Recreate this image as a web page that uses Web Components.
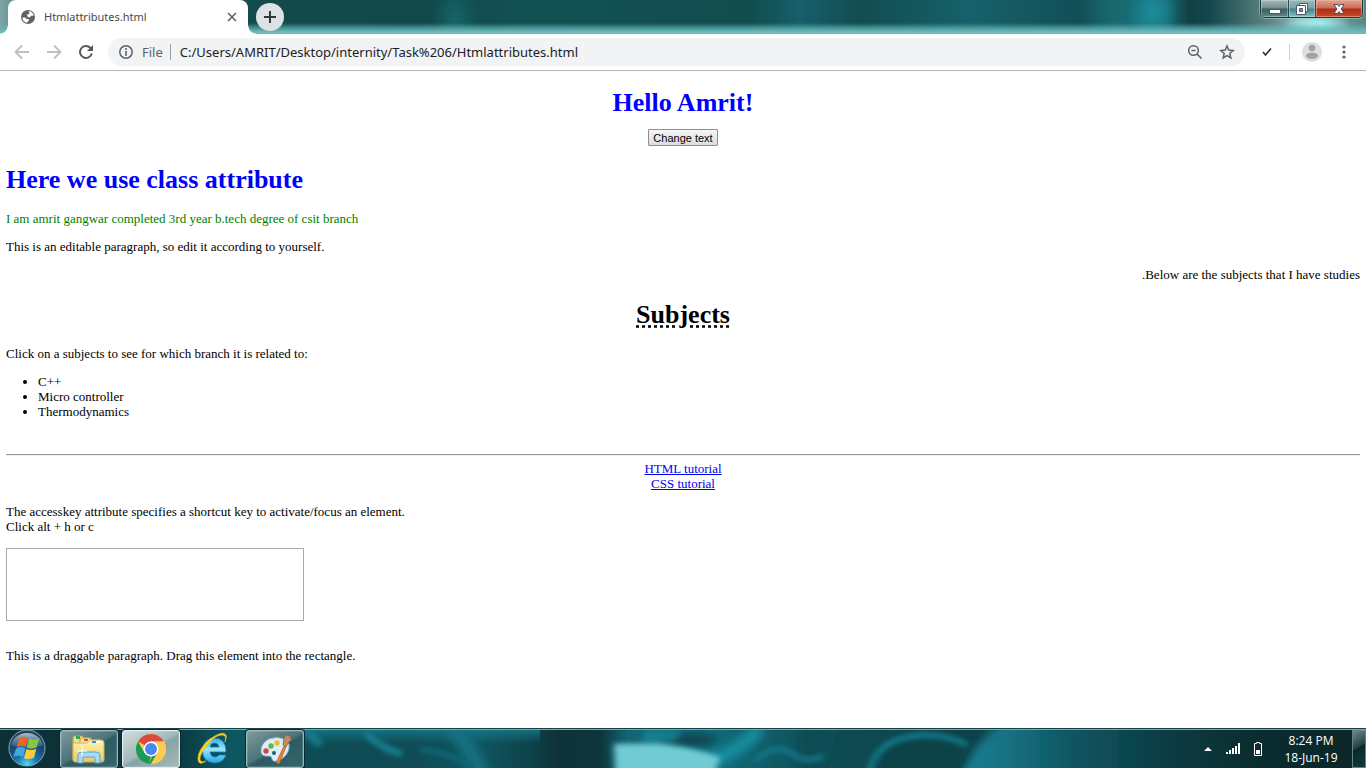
<!DOCTYPE html>
<html lang="en">
<head>
<meta charset="utf-8">
<title>Htmlattributes.html</title>
<style>
html, body { height: 100%; margin: 0; }
body { display: flex; flex-direction: column; background: #fff; overflow: hidden; }
page-view { flex: 1; }
</style>
</head>
<body>
<tab-strip><browser-tab>Htmlattributes.html</browser-tab></tab-strip>
<address-bar></address-bar>
<page-view></page-view>
<task-bar></task-bar>

<template id="tpl-tab">
<style>
:host { display: flex; align-items: center; position: relative; box-sizing: border-box; width: 240px; height: 34px; padding: 0 9px 0 12px; background: #fff; border-radius: 8px 8px 0 0; font: 11px/16px "Noto Sans", "Open Sans", sans-serif; color: #45494d; }
:host::before, :host::after { content: ""; position: absolute; bottom: 0; width: 8px; height: 8px; }
:host::before { left: -8px; background: radial-gradient(circle at 0 0, transparent 7px, #fff 8px); }
:host::after { right: -8px; background: radial-gradient(circle at 100% 0, transparent 7px, #fff 8px); }
.name { flex: 1; margin-left: 8px; white-space: nowrap; }
button { display: flex; border: 0; padding: 0; background: none; }
</style>
<svg width="16" height="16" viewBox="0 0 16 16"><circle cx="8" cy="8" r="7" fill="#5f6368"/><path d="M2.300 8.500h2.900l1.500 1.500h2v1.800l-1.800 1.900C4.200 13.200 2.400 11.200 2.300 8.500ZM8.200 2.300h1.900c1.900.8 3.300 2.500 3.600 4.500h-2.500l-1.200 1.400H8.300L7.200 7V5.300h1.500l1-1.300Z" fill="#fff"/></svg>
<span class="name"><slot></slot></span>
<button aria-label="Close tab"><svg width="14" height="14" viewBox="0 0 14 14"><path d="m3 3 8 8M11 3l-8 8" stroke="#5f6368" stroke-width="1.600"/></svg></button>
</template>

<template id="tpl-strip">
<style>
:host { display: flex; height: 34px; padding-left: 8px; background:
 linear-gradient(transparent 23px, #62b4b5aa 28px, #6bbcbd 32px),
 radial-gradient(ellipse 36px 26px at 1317px 32px, #a5efee 30%, transparent),
 radial-gradient(ellipse 26px 30px at 1152px 12px, #1b8e9b, transparent),
 radial-gradient(ellipse 24px 40px at 455px 20px, #156568, transparent),
 linear-gradient(90deg, #7fa3a3 0, #54898b 20px, #124b4c 250px, #124849 420px, #125153 520px, #124d4e 750px, #165f6c 800px, #124d50 860px, #15616b 970px, #155960 1020px, #124f58 1080px, #17696f 1110px, #176d78 1165px, #123f44 1190px, #13484d 1210px, #618684 1270px, #8cb8b7 1300px, #568582 1366px); }
.new { width: 28px; height: 28px; margin: 3px 0 0 8px; border: 0; border-radius: 50%; padding: 0; background: #dee1e6; display: grid; place-items: center; }
.controls { display: flex; height: 18px; margin: 0 3px 0 auto; box-sizing: border-box; border: 1px solid #173d40; border-top: 0; border-radius: 0 0 5px 5px; box-shadow: 0 0 0 1px #a4caca99; overflow: hidden; }
.controls button { width: 28px; padding: 0; border: 0; border-right: 1px solid #234a4c; display: grid; place-items: center; background: linear-gradient(#a6b8b8, #708e90 48%, #385d60 52%, #5c8989); box-shadow: inset 0 0 0 1px #d9eaea66; }
.controls .restore { width: 27px; background: linear-gradient(#9bb7b7, #76a3a5 48%, #457f86 52%, #81c4c6); }
.controls .close { width: 46px; border: 0; background: linear-gradient(#e0a595, #cd6a54 48%, #ad2c15 52%, #c84c2f); box-shadow: inset 0 0 0 1px #f2b7a888; }
</style>
<slot></slot>
<button class="new" aria-label="New tab"><svg width="16" height="16" viewBox="0 0 16 16"><path d="M8 2v12M2 8h12" stroke="#36393c" stroke-width="2"/></svg></button>
<div class="controls">
<button aria-label="Minimize"><svg width="14" height="14" viewBox="0 0 14 14"><rect x="1.500" y="7.500" width="11" height="4" fill="#fff" stroke="#4c5670"/></svg></button>
<button class="restore" aria-label="Restore"><svg width="14" height="14" viewBox="0 0 14 14"><path d="M4.500 1.500h8v8h-8Z" fill="#fff" stroke="#4c5670"/><path d="M1.500 3.500h9v9h-9Z" fill="#fff" stroke="#4c5670"/><path d="M4.500 6.500h3v3h-3Z" fill="#6d9da2" stroke="#4c5670"/></svg></button>
<button class="close" aria-label="Close"><svg width="14" height="14" viewBox="0 0 14 14"><path d="M2 2.500h3.500L7 4.500l1.500-2H12L9.200 7l2.800 4.500H8.500L7 9.500l-1.500 2H2L4.800 7Z" fill="#fff" stroke="#4c4860"/></svg></button>
</div>
</template>

<template id="tpl-address">
<style>
:host { display: flex; align-items: center; height: 36px; padding: 0 14px; border-bottom: 1px solid #b4b6b8; background: #fff; font: 13px/20px "Noto Sans", "Open Sans", sans-serif; }
button { width: 16px; height: 16px; border: 0; padding: 0; background: none; display: grid; place-items: center; flex: none; }
.nav { display: flex; gap: 16px; margin-right: 14px; }
.box { flex: 1; display: flex; align-items: center; height: 28px; border-radius: 14px; background: #f1f3f4; padding: 0 10px; }
.scheme { margin: 0 7px 0 8px; color: #5f6368; }
.bar { width: 1px; height: 16px; background: #9aa0a6; }
input { flex: 1; min-width: 0; border: 0; background: none; padding: 0 0 0 9px; outline: 0; font: inherit; color: #202124; }
.end { display: flex; gap: 16px; }
.tools { display: flex; align-items: center; margin-left: 14px; }
.tools .bar { margin: 0 12px 0 14px; background: #cfd1d4; }
.tools .who { width: 20px; height: 20px; margin-right: 14px; }
</style>
<div class="nav">
<button aria-label="Back"><svg width="16" height="16" viewBox="0 0 16 16"><path d="M15 8H2M8 1.500 1.500 8 8 14.500" fill="none" stroke="#bcbec0" stroke-width="1.800"/></svg></button>
<button aria-label="Forward"><svg width="16" height="16" viewBox="0 0 16 16"><path d="M1 8h13M8 1.500 14.500 8 8 14.500" fill="none" stroke="#bcbec0" stroke-width="1.800"/></svg></button>
<button aria-label="Reload"><svg width="16" height="16" viewBox="0 0 16 16"><path d="M13.800 9.500A6 6 0 1 1 12.300 3.800L14 5.500" fill="none" stroke="#55595d" stroke-width="2"/><path d="M15 1v6H9Z" fill="#55595d"/></svg></button>
</div>
<div class="box">
<svg width="16" height="16" viewBox="0 0 16 16"><circle cx="8" cy="8" r="6.200" fill="none" stroke="#5f6368" stroke-width="1.500"/><path d="M8 7v5M8 4v2" stroke="#5f6368" stroke-width="1.600"/></svg>
<label class="scheme" for="url">File</label><span class="bar"></span>
<input id="url" value="C:/Users/AMRIT/Desktop/internity/Task%206/Htmlattributes.html">
<div class="end">
<button aria-label="Zoom"><svg width="16" height="16" viewBox="0 0 16 16"><circle cx="6.500" cy="6.500" r="4.800" fill="none" stroke="#5f6368" stroke-width="1.500"/><path d="m10 10 4.500 4.500M4.500 6.500h4" fill="none" stroke="#5f6368" stroke-width="1.600"/></svg></button>
<button aria-label="Bookmark"><svg width="16" height="16" viewBox="0 0 16 16"><path d="m8 2 1.700 4.100 4.500.4-3.400 3 1 4.400L8 11.600l-3.800 2.300 1-4.400-3.400-3 4.500-.4Z" fill="none" stroke="#5f6368" stroke-width="1.500"/></svg></button>
</div>
</div>
<div class="tools">
<button aria-label="Extension"><svg width="16" height="16" viewBox="0 0 16 16"><path d="m4 8 2.500 3L12 4.500" fill="none" stroke="#333" stroke-width="1.700"/></svg></button>
<span class="bar"></span>
<button class="who" aria-label="Profile"><svg width="20" height="20" viewBox="0 0 20 20"><circle cx="10" cy="10" r="10" fill="#dedede"/><circle cx="10" cy="6" r="3.200" fill="#a2a2a2"/><ellipse cx="10" cy="13.800" rx="6" ry="3.200" fill="#a2a2a2"/></svg></button>
<button aria-label="Menu"><svg width="16" height="16" viewBox="0 0 16 16" fill="#5f6368"><circle cx="8" cy="3" r="1.600"/><circle cx="8" cy="8" r="1.600"/><circle cx="8" cy="13" r="1.600"/></svg></button>
</div>
</template>

<template id="tpl-page">
<style>
:host { display: block; overflow: hidden; padding: 17px 6px 0; background: #fff; color: #000; font: 13px/15px "Liberation Serif", serif; }
h1 { margin: 18px 0 16px; font-size: 26px; line-height: 30px; font-weight: bold; }
.blue { color: #00f; }
.center { text-align: center; }
.first { margin: 0 0 11px; }
p { margin: 13px 0; }
.green { color: #008000; }
.press { display: flex; justify-content: center; margin-bottom: 19px; }
.press button { box-sizing: border-box; height: 17px; padding: 0 4px; border: 1px solid #8f8f8f; border-radius: 1px; background: linear-gradient(#f5f5f5, #dcdcdc); color: #000; font: 11px/14px "Liberation Sans", sans-serif; }
abbr { text-decoration: underline dotted; }
ul { margin: 13px 0 35px; padding-left: 32px; }
hr { margin: 0 0 5px; border: 0; border-top: 1px solid #9a9a9a; border-bottom: 1px solid #eee; }
nav { text-align: center; }
a { color: #00e; }
.drop { box-sizing: border-box; width: 298px; height: 73px; margin-top: 14px; border: 1px solid #aaa; }
.drag { margin-top: 27px; }
</style>
<h1 class="blue center first">Hello Amrit!</h1>
<div class="press"><button>Change text</button></div>
<h1 class="blue">Here we use class attribute</h1>
<p class="green">I am amrit gangwar completed 3rd year b.tech degree of csit branch</p>
<p contenteditable="true">This is an editable paragraph, so edit it according to yourself.</p>
<p dir="rtl">Below are the subjects that I have studies.</p>
<h1 class="center"><abbr title="Subjects">Subjects</abbr></h1>
<p>Click on a subjects to see for which branch it is related to:</p>
<ul><li>C++</li><li>Micro controller</li><li>Thermodynamics</li></ul>
<hr>
<nav><a href="#html" accesskey="h">HTML tutorial</a><br><a href="#css" accesskey="c">CSS tutorial</a></nav>
<p>The accesskey attribute specifies a shortcut key to activate/focus an element.<br>Click alt + h or c</p>
<div class="drop"></div>
<p class="drag" draggable="true">This is a draggable paragraph. Drag this element into the rectangle.</p>
</template>

<template id="tpl-taskbar">
<style>
:host { display: flex; position: relative; align-items: center; height: 40px; box-sizing: border-box; border-top: 1px solid #183f45; background: #0f464f; color: #fff; font: 12px/17px "Open Sans", "Noto Sans", sans-serif; overflow: hidden; }
.back { position: absolute; inset: 0; width: 100%; height: 100%; border-top: 1px solid #79a9aa; box-sizing: border-box; }
button { position: relative; border: 0; padding: 0; background: none; display: grid; place-items: center; flex: none; }
.start { width: 40px; height: 39px; margin: 0 13px 0 7px; }
.apps { display: flex; gap: 4px; }
.apps button { width: 58px; height: 38px; box-sizing: border-box; border-radius: 3px; }
.apps .open { border: 1px solid #a1b8bb; background: linear-gradient(150deg, #7f9a9d, #4c7479 48%, #2c5b63 54%, #36666b); box-shadow: inset 0 0 0 1px #ffffff22, 0 0 0 1px #062b31; }
.apps .active { border-color: #e4eeee; background: linear-gradient(150deg, #d0dddd, #a4b8b9 48%, #86a3a5 54%, #a6b9b9); }
.tray { position: relative; display: flex; align-items: center; margin-left: auto; }
.icons { display: flex; gap: 9px; margin-right: 14px; }
.icons button { width: 16px; height: 16px; }
time { width: 62px; text-align: center; white-space: nowrap; }
.tray .peek { box-sizing: border-box; width: 14px; height: 38px; margin-left: 10px; border: 1px solid #668284; background: linear-gradient(150deg, #70898b, #233f43 45%, #0a292d 46%, #12383b); }
</style>
<svg class="back" viewBox="0 0 1366 39" preserveAspectRatio="none" aria-hidden="true">
<defs>
<linearGradient id="base"><stop offset="0" stop-color="#0b3036"/><stop offset=".04" stop-color="#0d3138"/><stop offset=".13" stop-color="#0b3a42"/><stop offset=".17" stop-color="#0e5762"/><stop offset=".22" stop-color="#0f4c55"/><stop offset=".3" stop-color="#0f4b54"/><stop offset=".35" stop-color="#0f5762"/><stop offset=".385" stop-color="#0e444c"/><stop offset=".41" stop-color="#0d3237"/><stop offset=".44" stop-color="#0d373d"/><stop offset=".46" stop-color="#126676"/><stop offset=".52" stop-color="#126d7c"/><stop offset=".6" stop-color="#0f4d56"/><stop offset=".7" stop-color="#0d4047"/><stop offset=".81" stop-color="#0f4650"/><stop offset=".92" stop-color="#0a2d30"/><stop offset="1" stop-color="#0a2527"/></linearGradient>
<linearGradient id="fade"><stop offset="0" stop-color="#168497"/><stop offset=".35" stop-color="#126574"/><stop offset="1" stop-color="#0d3f46" stop-opacity="0"/></linearGradient>
<linearGradient id="top" x2="0" y2="1"><stop offset="0" stop-color="#15808f" stop-opacity=".7"/><stop offset="1" stop-color="#15808f" stop-opacity="0"/></linearGradient>
<filter id="soft" filterUnits="userSpaceOnUse" x="0" y="-40" width="1366" height="120"><feGaussianBlur stdDeviation="5"/></filter>
<filter id="thin" filterUnits="userSpaceOnUse" x="0" y="-40" width="1366" height="120"><feGaussianBlur stdDeviation="3"/></filter>
</defs>
<rect width="1366" height="39" fill="url(#base)"/>
<rect x="300" width="240" height="14" fill="url(#top)"/>
<g filter="url(#soft)">
<path d="M452-5q14 18 32 55" stroke="#14707f" stroke-width="16" fill="none"/>
<path d="M800 50V-5h40l-20 55Z" fill="#0f4c55"/>
<ellipse cx="690" cy="10" rx="28" ry="6" fill="#0d4048"/>
<path d="M700 34q34-6 60-36" stroke="#168da0" stroke-width="14" fill="none"/>
<path d="M958 55Q970 15 1005-10H1180V55Z" fill="url(#fade)"/>
</g>
<g filter="url(#thin)">
<path d="M366 3q12 14 36 22" stroke="#148091" stroke-width="7" fill="none"/>
<path d="M300-2q14 8 20 18" stroke="#14788a" stroke-width="9" fill="none"/>
<path d="M420 20q30 2 52 20" stroke="#116474" stroke-width="6" fill="none"/>
<path d="M614 14h44q38 4 62 14l-10 30h-94Z" fill="#6fcbd4"/>
<path d="M645 0h38l-8 12h-32Z" fill="#1991a0" opacity=".6"/>
<path d="M755 32q20-20 36-8t32 2" stroke="#14788a" stroke-width="5" fill="none"/>
<path d="M869 46Q875 5 925 5q24 0 42 14-4 12-10 28Z" fill="#0e424a"/>
<path d="M869 46Q875 6 925 5q24 0 42 10" stroke="#157f90" stroke-width="5" fill="none"/>
</g>
</svg>
<button class="start" aria-label="Start"><svg width="40" height="39" viewBox="0 0 40 39">
<defs><radialGradient id="orb" cx=".5" cy=".95" r=".8"><stop stop-color="#4ed9fb"/><stop offset=".35" stop-color="#1b79b4"/><stop offset=".7" stop-color="#174b78"/><stop offset="1" stop-color="#24425f"/></radialGradient><linearGradient id="shine" x2="0" y2="1"><stop stop-color="#e1edf2"/><stop offset="1" stop-color="#5a8caa" stop-opacity=".35"/></linearGradient></defs>
<circle cx="20" cy="19" r="18" fill="url(#orb)" stroke="#86a9bc"/><path d="M4 16a16.500 16 0 0 1 32 0q-15 6-32 0Z" fill="url(#shine)" opacity=".75"/>
<path d="M12 9.500q4.500-3 9-.5l-2.400 9q-4-2.500-8.800.2Z" fill="#ef6428"/><path d="M22.200 9.600q5 2.400 10-.6l-2.500 9.200q-5 2.700-9.900.4Z" fill="#8bc63e"/><path d="M9 19.600q4.700-2.800 9.300-.3l-2.400 8.600q-4.400-2.300-9.300.2Z" fill="#42a7df"/><path d="M19.400 20q4.800 2.300 9.900-.3l-2.300 8.800q-5.300 3-10 .4Z" fill="#fdcb3b"/></svg></button>
<div class="apps">
<button class="open" aria-label="Windows Explorer"><svg width="36" height="32" viewBox="0 0 36 32">
<defs><linearGradient id="fold" x2="0" y2="1"><stop stop-color="#fff4b2"/><stop offset="1" stop-color="#e5c868"/></linearGradient></defs>
<path d="M2 5q0-2 2-2h7l2 2h7l1 4v19H4q-2 0-2-2Z" fill="#f3dd8b" stroke="#c6a44a"/><path d="M5 3h4v3H5Z" fill="#2fa84f"/><path d="M9 7q0-2 2-2h7l2 2h9v21H9Z" fill="#f7e59d" stroke="#c6a44a"/><path d="M13 6h4v2h-4Z" fill="#d6532e"/><path d="M2 10h14l3-3h11q3 0 3 3v17q0 2-2 2H4q-2 0-2-2Z" fill="url(#fold)" stroke="#d1b057"/><path d="M22 8h7v2h-7Z" fill="#fff"/><path d="M21 8h4v2h-4Z" fill="#2797d4"/>
<path d="M7 30v-8q0-3 4-3h14q4 0 4 3v8h-5v-5q0-1-1-1H13q-1 0-1 1v5Z" fill="#a9daf2" stroke="#5ca2ca"/><path d="M11 13v10M6 18h10" stroke="#fff"/></svg></button>
<button class="open active" aria-label="Google Chrome"><svg width="32" height="32" viewBox="0 0 32 32"><circle cx="16" cy="16" r="15" fill="#fdcb4e"/><path d="M16 16 3 8.500A15 15 0 0 1 29 8.500H16Z" fill="#db4a3f"/><path d="M3 8.500 9.500 19.750 16 23.500 L14 31A15 15 0 0 1 3 8.500Z" fill="#189b58"/><path d="M9.500 19.750 16 16l6.500 3.750L16 31h-2l3-7.600Z" fill="#189b58"/><path d="M16 8.500h13A15 15 0 0 1 16 31l6.500-11.250Z" fill="#fdcb4e"/><circle cx="16" cy="16" r="7.500" fill="#fff"/><circle cx="16" cy="16" r="6" fill="#4687f4"/></svg></button>
<button aria-label="Internet Explorer"><svg width="36" height="34" viewBox="0 0 36 34">
<defs><linearGradient id="ie" x2="0" y2="1"><stop stop-color="#3fa9e5"/><stop offset=".45" stop-color="#9be5ff"/><stop offset="1" stop-color="#24a4e6"/></linearGradient></defs>
<path d="M31 20H15q1 5 5 5 3 0 4-2h7q-3 8-11.500 8Q7.500 30 7.500 18.500 8 7 19 6q12 0 12 14ZM15 15h9q-.5-4-4.500-4T15 15Z" fill="url(#ie)" stroke="#1683c3" stroke-width=".8"/><path d="M30 10q2-7-3-7-6 0-12 7Q4 22 5 28q1 3 6 1-7 5-8-1Q2 18 15 7q13-9 16-4 1 2-1 7Z" fill="#ffd51f" stroke="#e5b514" stroke-width=".7"/></svg></button>
<button class="open" aria-label="Paint"><svg width="36" height="34" viewBox="0 0 36 34">
<path d="M4 19q0-8 8-12 8-3 15 0 6 3 5 9-1 7-9 12-7 3-8-1 0-3-3-3-8 1-8-5Z" fill="#dceef8" stroke="#8db7d0"/><circle cx="9" cy="19" r="2.700" fill="#d8443a"/><circle cx="14" cy="14" r="2.700" fill="#5bb947"/><circle cx="20" cy="11" r="2.700" fill="#f2b92e"/><circle cx="17" cy="21" r="2" fill="#245b75"/>
<path d="m27 14 2 1-7 17q-3 0-2-3Z" fill="#e6832b" stroke="#b85f18" stroke-width=".7"/><path d="m26 13 3 2 3-5 3-3-2-1 1-3-3 1-1-2-3 4Z" fill="#c38c5a" stroke="#895a33" stroke-width=".7"/></svg></button>
</div>
<div class="tray">
<div class="icons">
<button aria-label="Show hidden icons"><svg width="16" height="16" viewBox="0 0 16 16"><path d="m8 6 4 4H4Z" fill="#fff"/></svg></button>
<button aria-label="Network"><svg width="16" height="16" viewBox="0 0 16 16" fill="#fff"><path d="M1 11h2v2H1ZM4 9h2v4H4ZM7 7h2v6H7ZM10 5h2v8h-2ZM13 2h2v11h-2Z"/></svg></button>
<button aria-label="Battery"><svg width="16" height="16" viewBox="0 0 16 16"><path d="M4.500 2.500h2v-1h3v1h2v12h-7Z" fill="#162a2d" stroke="#fff"/><path d="M6 9h4v4H6Z" fill="#fff"/></svg></button>
</div>
<time datetime="2019-06-18T20:24">8:24 PM<br>18-Jun-19</time>
<button class="peek" aria-label="Show desktop"></button>
</div>
</template>

<script>
const define = (name, id) => customElements.define(name, class extends HTMLElement {
  constructor() {
    super();
    this.attachShadow({ mode: "open" }).append(document.getElementById(id).content.cloneNode(true));
  }
});
define("browser-tab", "tpl-tab");
define("tab-strip", "tpl-strip");
define("address-bar", "tpl-address");
define("page-view", "tpl-page");
define("task-bar", "tpl-taskbar");
</script>
</body>
</html>
